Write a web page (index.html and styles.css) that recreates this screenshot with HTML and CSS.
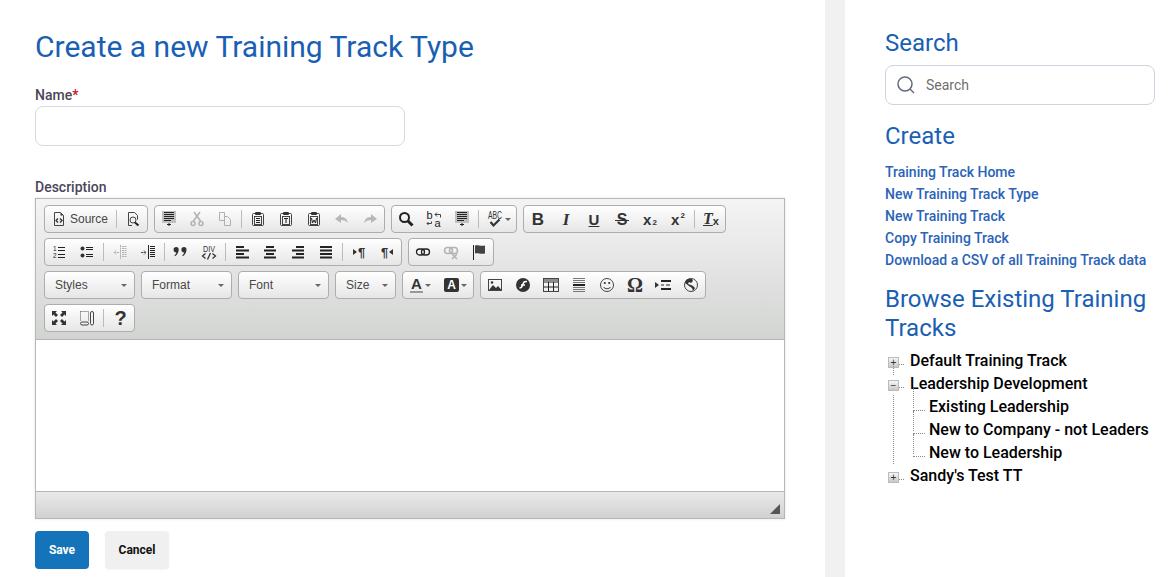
FILE: index.html
```html
<!DOCTYPE html>
<html lang="en">
<head>
<meta charset="utf-8">
<title>Create a new Training Track Type</title>
<link rel="stylesheet" href="styles.css">
</head>
<body>
<main class="main">
  <h1 class="title">Create a new Training Track Type</h1>
  <form class="form">
    <label class="label">Name<span class="req">*</span></label>
    <input class="input name-input" type="text">
    <label class="label desc-label">Description</label>
    <div class="editor">
      <div class="toolbar">
        <div class="row">
          <div class="group">
            <a class="btn btn-text"><svg class="ic" viewBox="0 0 16 16"><path class="ol" d="M3.500 1.500h6l3 3v10h-9z"/><path class="fill" d="M9.500 1.500l3 3h-3z"/><path class="ol2" d="M7 7.500l-2 2 2 2M9 7.500l2 2-2 2"/></svg><span>Source</span></a>
            <i class="sep"></i>
            <a class="btn"><svg class="ic" viewBox="0 0 16 16"><path class="ol" d="M7 14.500H3.500v-13h6l3 3v4"/><circle class="ol" cx="8" cy="9" r="3"/><path class="thick" d="M10 11.500l3.500 3"/></svg></a>
          </div>
          <div class="group">
            <a class="btn"><svg class="ic" viewBox="0 0 16 16"><rect class="shade" x="1" y="0" width="14" height="12"/><path class="line" d="M3 1.500h10M3 3.500h10M3 5.500h10M3 7.500h10M3 9.500h7M6 13.500h4M8 12v3"/></svg></a>
            <a class="btn"><svg class="ic" viewBox="0 0 16 16"><path class="gy2" d="M5 1l6.500 9M11 1l-6.500 9"/><circle class="gy2" cx="4" cy="12.500" r="2"/><circle class="gy2" cx="12" cy="12.500" r="2"/></svg></a>
            <a class="btn"><svg class="ic" viewBox="0 0 16 16"><path class="gy" d="M2.500 1.500h5v8h-5zM7.500 5.500h3l3 3v6h-6z"/></svg></a>
            <i class="sep"></i>
            <a class="btn"><svg class="ic" viewBox="0 0 16 16"><path class="ol" d="M5 2.500H3.500a1 1 0 0 0-1 1v10a1 1 0 0 0 1 1h9a1 1 0 0 0 1-1v-10a1 1 0 0 0-1-1H11"/><rect class="ol" x="4.500" y="5.500" width="7" height="8"/><rect class="fill" x="5" y="1" width="6" height="3" rx="1"/><path class="line" d="M6 7.500h4M6 9.500h4M6 11.500h4"/></svg></a>
            <a class="btn"><svg class="ic" viewBox="0 0 16 16"><path class="ol" d="M5 2.500H3.500a1 1 0 0 0-1 1v10a1 1 0 0 0 1 1h9a1 1 0 0 0 1-1v-10a1 1 0 0 0-1-1H11"/><rect class="ol" x="4.500" y="5.500" width="7" height="8"/><rect class="fill" x="5" y="1" width="6" height="3" rx="1"/><path class="line" d="M6 7.500h4M8 7.500v4.500"/></svg></a>
            <a class="btn"><svg class="ic" viewBox="0 0 16 16"><path class="ol" d="M5 2.500H3.500a1 1 0 0 0-1 1v10a1 1 0 0 0 1 1h9a1 1 0 0 0 1-1v-10a1 1 0 0 0-1-1H11"/><rect class="ol" x="4.500" y="5.500" width="7" height="8"/><rect class="fill" x="5" y="1" width="6" height="3" rx="1"/><path class="line" d="M5.500 7l1 5 1.500-3 1.500 3 1-5"/></svg></a>
            <a class="btn"><svg class="ic" viewBox="0 0 16 16"><path class="gyf" d="M1 8l6-5v3c4 0 6 2 7 6-2-2-4-3-7-3v3z"/></svg></a>
            <a class="btn"><svg class="ic" viewBox="0 0 16 16"><path class="gyf" d="M15 8L9 3v3c-4 0-6 2-7 6 2-2 4-3 7-3v3z"/></svg></a>
          </div>
          <div class="group">
            <a class="btn"><svg class="ic" viewBox="0 0 16 16"><circle class="thick" cx="6.500" cy="6.500" r="4.500"/><path class="thicker" d="M10 10l4.500 4.500"/></svg></a>
            <a class="btn"><svg class="ic" viewBox="0 0 16 16"><text class="tiny-b" x="0.500" y="8">b</text><text class="tiny-b" x="8.500" y="16">a</text><path class="ol" d="M1 12.500h4.500V10.500M1 12.500l1.500-1.500M1 12.500l1.500 1.500M14.500 3.500H9M9 3.500l2-2M9 3.500l2 2M14.500 3.500v3"/></svg></a>
            <a class="btn"><svg class="ic" viewBox="0 0 16 16"><rect class="shade" x="1" y="0" width="14" height="12"/><path class="line" d="M3 1.500h10M3 3.500h10M3 5.500h10M3 7.500h10M3 9.500h7M6 13.500h4M8 12v3"/></svg></a>
            <i class="sep"></i>
            <a class="btn btn-wide"><svg class="ic" viewBox="0 0 16 16"><text class="tiny" x="1" y="8" textLength="14" lengthAdjust="spacingAndGlyphs">ABC</text><path class="check" d="M3.500 11l3 3.500 6-6"/></svg><b class="caret"></b></a>
          </div>
          <div class="group">
            <a class="btn glyph g-b">B</a>
            <a class="btn glyph g-i">I</a>
            <a class="btn glyph g-u">U</a>
            <a class="btn glyph g-s">S</a>
            <a class="btn glyph g-x">x<small>2</small></a>
            <a class="btn glyph g-x">x<sup>2</sup></a>
            <i class="sep"></i>
            <a class="btn glyph g-tx"><em>T</em><small>x</small></a>
          </div>
        </div>
        <div class="row">
          <div class="group">
            <a class="btn"><svg class="ic" viewBox="0 0 16 16"><text class="tiny2" x="2" y="7">1</text><text class="tiny2" x="2" y="14">2</text><path class="line" d="M7 3.500h7M7 6.500h7M7 10.500h7M7 13.500h7"/></svg></a>
            <a class="btn"><svg class="ic" viewBox="0 0 16 16"><circle class="fill" cx="3.500" cy="4.500" r="2"/><circle class="fill" cx="3.500" cy="11.500" r="2"/><path class="line" d="M7 3.500h7M7 5.500h7M7 10.500h7M7 12.500h7"/></svg></a>
            <i class="sep"></i>
            <a class="btn"><svg class="ic" viewBox="0 0 16 16"><path class="gy" d="M8.500 1v14M10 2.500h5M10 4.500h5M10 6.500h5M10 8.500h5M10 10.500h5M10 12.500h5M7 8.500H2M4 6.500l-2 2 2 2" stroke-dasharray="2 0.500"/></svg></a>
            <a class="btn"><svg class="ic" viewBox="0 0 16 16"><path class="line" d="M8.500 1v14M10 2.500h5M10 4.500h5M10 6.500h5M10 8.500h5M10 10.500h5M10 12.500h5"/><path class="ol" d="M1 8.500h5M4 6.500l2 2-2 2" stroke-dasharray="2 0.500"/></svg></a>
            <i class="sep"></i>
            <a class="btn"><svg class="ic" viewBox="0 0 16 16"><path class="fill" d="M3.200 3a2.500 2.500 0 0 1 2.500 2.500c0 3-1.500 5.500-3.700 6.700l-.6-.8c1.100-.8 1.800-1.900 2-3A2.500 2.500 0 1 1 3.200 3zM11 3a2.500 2.500 0 0 1 2.500 2.500c0 3-1.500 5.500-3.700 6.700l-.6-.8c1.100-.8 1.800-1.900 2-3A2.500 2.500 0 1 1 11 3z"/></svg></a>
            <a class="btn"><svg class="ic" viewBox="0 0 16 16"><text class="tiny3" x="2" y="8" textLength="12" lengthAdjust="spacingAndGlyphs">DIV</text><path class="ol2" d="M4.500 9.500l-3 2.500 3 2.500M11.500 9.500l3 2.500-3 2.500M9.500 9l-3 6.500"/></svg></a>
            <i class="sep"></i>
            <a class="btn"><svg class="ic" viewBox="0 0 16 16"><path class="bar" d="M2 3h8M2 6.500h13M2 10h8M2 13.500h13"/></svg></a>
            <a class="btn"><svg class="ic" viewBox="0 0 16 16"><path class="bar" d="M4 3h8M2 6.500h12M4 10h8M2 13.500h12"/></svg></a>
            <a class="btn"><svg class="ic" viewBox="0 0 16 16"><path class="bar" d="M6 3h8M2 6.500h12M6 10h8M2 13.500h12"/></svg></a>
            <a class="btn"><svg class="ic" viewBox="0 0 16 16"><path class="bar" d="M2 3h12M2 6.500h12M2 10h12M2 13.500h12"/></svg></a>
            <i class="sep"></i>
            <a class="btn glyph g-p"><svg class="mini" viewBox="0 0 4 6"><path class="fill" d="M0 0l4 3-4 3z"/></svg>¶</a>
            <a class="btn glyph g-p">¶<svg class="mini" viewBox="0 0 4 6"><path class="fill" d="M4 0L0 3l4 3z"/></svg></a>
          </div>
          <div class="group">
            <a class="btn"><svg class="ic" viewBox="0 0 16 16"><rect class="med" x="1.500" y="5" width="8" height="6" rx="3"/><rect class="med" x="6.500" y="5" width="8" height="6" rx="3"/></svg></a>
            <a class="btn"><svg class="ic" viewBox="0 0 16 16"><rect class="gy2" x="1.500" y="3.500" width="8" height="6" rx="3"/><rect class="gy2" x="6.500" y="3.500" width="8" height="6" rx="3"/><path class="gy2" d="M9 10l5 5M14 10l-5 5"/></svg></a>
            <a class="btn"><svg class="ic" viewBox="0 0 16 16"><path class="line" d="M2.500 1v15"/><path class="flag" d="M4 1.500c3-1 5 1 10 0v8c-5 1-7-1-10 0z"/></svg></a>
          </div>
        </div>
        <div class="row">
          <a class="combo combo-lg">Styles<b class="caret"></b></a>
          <a class="combo combo-lg">Format<b class="caret"></b></a>
          <a class="combo combo-lg">Font<b class="caret"></b></a>
          <a class="combo combo-sm">Size<b class="caret"></b></a>
          <div class="group">
            <a class="btn btn-wide glyph g-a"><span class="a-u">A</span><b class="caret"></b></a>
            <a class="btn btn-wide glyph g-a"><span class="a-bg">A</span><b class="caret"></b></a>
          </div>
          <div class="group">
            <a class="btn"><svg class="ic" viewBox="0 0 16 16"><rect class="ol" x="1.500" y="2.500" width="13" height="11"/><path class="fill" d="M2 13l4-5 3 3 2-2 3.500 4z"/><circle class="fill" cx="5" cy="5.500" r="1.300"/></svg></a>
            <a class="btn"><svg class="ic" viewBox="0 0 16 16"><circle class="fill" cx="8" cy="8" r="7"/><path class="wht" d="M4.500 11c2.500 0 2.500-1.500 3.500-4S9.500 4.500 12 4.500M6 8h4"/></svg></a>
            <a class="btn"><svg class="ic" viewBox="0 0 16 16"><rect class="ol" x="0.500" y="1.500" width="15" height="13"/><path class="line" d="M1 5h14M1 10h14M5.500 5v9M10.500 5v9"/><path class="line" d="M1 3h14"/></svg></a>
            <a class="btn"><svg class="ic" viewBox="0 0 16 16"><path class="gyl" d="M2 1.500h12M2 3.500h12M2 5.500h12M2 10.500h12M2 12.500h12M2 14.500h12"/><path class="bar" d="M2 8h12"/></svg></a>
            <a class="btn"><svg class="ic" viewBox="0 0 16 16"><circle class="ol" cx="8" cy="8" r="6.500"/><circle class="fill" cx="5.800" cy="6" r="1.100"/><circle class="fill" cx="10.200" cy="6" r="1.100"/><path class="ol" d="M4.500 10c1.500 2.300 5.500 2.300 7 0"/></svg></a>
            <a class="btn glyph g-o">Ω</a>
            <a class="btn"><svg class="ic" viewBox="0 0 16 16"><path class="fill" d="M0 5l4 3-4 3z"/><path class="bar" d="M6 4h10M6 12h10"/><path class="line" d="M6 8h3M11 8h4"/></svg></a>
            <a class="btn"><svg class="ic" viewBox="0 0 16 16"><circle class="ol" cx="8" cy="8" r="6.500"/><path class="fill" d="M5 2l4 0 1 2-2 2-2-1-1 2 3 1 2 1 2 2-2 3-1-3-3-2-4-3 1-3z"/></svg></a>
          </div>
        </div>
        <div class="row">
          <div class="group">
            <a class="btn"><svg class="ic" viewBox="0 0 16 16"><path class="fill" d="M1 1h5L4.500 2.500 7 5 5 7 2.500 4.500 1 6zM15 1v5l-1.500-1.500L11 7 9 5l2.500-2.500L10 1zM1 15v-5l1.500 1.500L5 9l2 2-2.500 2.500L6 15zM15 15h-5l1.500-1.500L9 11l2-2 2.500 2.500L15 10z"/></svg></a>
            <a class="btn"><svg class="ic" viewBox="0 0 16 16"><path class="dots" d="M1.500 1.500h8v9M1.500 1.500v9"/><rect class="ol" x="1.500" y="12" width="8" height="3" rx="1.500"/><rect class="ol" x="11.500" y="1.500" width="3" height="13.500" rx="1.500"/></svg></a>
            <i class="sep"></i>
            <a class="btn glyph g-q">?</a>
          </div>
        </div>
      </div>
      <div class="content"></div>
      <div class="statusbar"><svg class="grip" viewBox="0 0 10 10"><path d="M10 0v10H0z"/></svg></div>
    </div>
    <div class="actions">
      <button class="action save" type="button">Save</button>
      <button class="action cancel" type="button">Cancel</button>
    </div>
  </form>
</main>
<aside class="side">
  <h2 class="side-head head-search">Search</h2>
  <div class="search">
    <svg class="search-ic" viewBox="0 0 18 18"><circle cx="8" cy="8" r="7"/><path d="M13 13l4 4"/></svg>
    <input class="search-input" type="text" placeholder="Search">
  </div>
  <h2 class="side-head head-create">Create</h2>
  <ul class="links">
    <li><a>Training Track Home</a></li>
    <li><a>New Training Track Type</a></li>
    <li><a>New Training Track</a></li>
    <li><a>Copy Training Track</a></li>
    <li><a>Download a CSV of all Training Track data</a></li>
  </ul>
  <h2 class="side-head head-browse">Browse Existing Training Tracks</h2>
  <ul class="tree">
    <li class="node"><span class="tog">+</span><span class="conn"></span><span class="node-text">Default Training Track</span></li>
    <li class="node"><span class="tog">−</span><span class="conn"></span><span class="node-text">Leadership Development</span></li>
    <li class="kids">
      <ul class="subtree">
        <li class="leaf"><span class="conn leaf-conn"></span><span class="node-text">Existing Leadership</span></li>
        <li class="leaf"><span class="conn leaf-conn"></span><span class="node-text">New to Company - not Leaders</span></li>
        <li class="leaf"><span class="conn leaf-conn"></span><span class="node-text">New to Leadership</span></li>
      </ul>
    </li>
    <li class="node"><span class="tog">+</span><span class="conn"></span><span class="node-text">Sandy's Test TT</span></li>
  </ul>
</aside>
</body>
</html>
```

FILE: styles.css
```css
* { box-sizing: border-box; }
html, body { margin: 0; height: 577px; overflow: hidden; background: #fff; }
body { display: flex; font-family: Roboto, "Liberation Sans", sans-serif; color: #000; }

.main { width: 825px; flex: none; padding: 27px 0 0 35px; }
.title { margin: 0; font-size: 30px; line-height: 40px; font-weight: 400; color: #1a5fb4; }
.form { display: flex; flex-direction: column; align-items: flex-start; margin-top: 20px; }
.label { font-size: 14px; line-height: 17px; font-weight: 500; color: #4b4658; }
.req { color: #d01020; }
.input { display: block; border: 1px solid #d8dae3; border-radius: 8px; background: #fff; }
.name-input { width: 370px; height: 40px; margin-top: 2px; }
.desc-label { margin-top: 33px; }

.editor { width: 750px; height: 321px; margin-top: 2px; border: 1px solid #b6b6b6; display: flex; flex-direction: column; box-shadow: 0 0 3px rgba(0,0,0,.1); }
.toolbar { height: 141px; flex: none; padding: 6px 8px 0; background: linear-gradient(#f4f4f4, #d2d4d2); border-bottom: 1px solid #b6b6b6; display: flex; flex-direction: column; gap: 5px; }
.row { display: flex; gap: 6px; height: 28px; }
.group { display: flex; align-items: center; height: 28px; border: 1px solid #adadad; border-radius: 4px; background: linear-gradient(#fff, #e6e6e6); }
.btn { width: 28px; height: 26px; flex: none; display: flex; align-items: center; justify-content: center; color: #333; }
.btn-text { width: 69px; justify-content: flex-start; padding-left: 6px; gap: 3px; font: 12px "Liberation Sans", Arial, sans-serif; color: #474747; }
.btn-wide { width: 35px; gap: 2px; }
.sep { width: 1px; height: 18px; margin: 0 2px; background: #bcbcbc; flex: none; }
.ic { width: 16px; height: 16px; display: block; flex: none; overflow: visible; }
.ic path, .ic circle, .ic rect { fill: none; }
.ic .ol { stroke: #444; stroke-width: 1; }
.ic .ol2 { stroke: #333; stroke-width: 1.300; }
.ic .med { stroke: #222; stroke-width: 1.300; }
.ic .thick { stroke: #222; stroke-width: 2; }
.ic .thicker { stroke: #222; stroke-width: 3; }
.ic .line { stroke: #222; stroke-width: 1; }
.ic .bar { stroke: #222; stroke-width: 2; }
.ic .fill { fill: #333; }
.ic .shade { fill: #c0c0c0; }
.ic .gy { stroke: #b0b0b0; stroke-width: 1; }
.ic .gy2 { stroke: #b4b4b4; stroke-width: 1.600; }
.ic .gyl { stroke: #777; stroke-width: 1; }
.ic .gyf { fill: #b8b8b8; }
.ic .check { stroke: #333; stroke-width: 2.200; }
.ic .flag { fill: #444; }
.ic .wht { stroke: #fff; stroke-width: 1.600; }
.ic .dots { stroke: #555; stroke-width: 1; stroke-dasharray: 1 1; }
.tiny { font: 10px "Liberation Sans", sans-serif; fill: #333; }
.tiny-b { font: 11px "Liberation Sans", sans-serif; fill: #222; }
.tiny2 { font: 6.500px "Liberation Sans", sans-serif; fill: #222; }
.tiny3 { font: 9px "Liberation Sans", sans-serif; fill: #333; }
.caret { width: 0; height: 0; border: 3px solid transparent; border-top-color: #666; border-bottom: 0; flex: none; }

.glyph { font-family: "Liberation Sans", Arial, sans-serif; color: #333; line-height: 1; }
.g-b { font-size: 17px; font-weight: 700; }
.g-i { font-size: 17px; font-style: italic; font-family: "Liberation Serif", serif; font-weight: 700; }
.g-u { font-size: 15px; font-weight: 700; text-decoration: underline; }
.g-s { position: relative; font-size: 16px; font-weight: 700; padding-top: 2px; }
.g-s::after { content: ""; position: absolute; left: 7px; right: 7px; top: 14px; height: 1px; background: #333; }
.g-x { font-size: 15px; font-weight: 700; }
.g-x small { font-size: 8px; align-self: flex-end; margin: 0 0 5px 1px; }
.g-x sup { font-size: 8px; align-self: flex-start; margin: 6px 0 0 1px; }
.g-tx { font-size: 16px; font-family: "Liberation Serif", serif; font-weight: 700; }
.g-tx em { text-decoration: underline; }
.g-tx small { font-size: 11px; font-family: "Liberation Sans", sans-serif; align-self: flex-end; margin-bottom: 5px; }
.g-p { font-size: 13px; font-weight: 700; gap: 1px; }
.mini { width: 4px; height: 6px; display: block; }
.mini path { fill: #333; }
.g-o { font-size: 20px; font-family: "Liberation Serif", serif; font-weight: 700; }
.g-q { font-size: 20px; font-weight: 700; padding-left: 1px; }
.g-a { font-size: 15px; font-weight: 700; }
.a-u { border-bottom: 2px solid #999; padding: 0 1px; line-height: 14px; color: #333; }
.a-bg { background: #333; color: #fff; border-radius: 2px; padding: 0 3px; font-size: 12px; line-height: 14px; }

.combo { height: 28px; display: flex; align-items: center; justify-content: space-between; padding: 0 7px 0 10px; border: 1px solid #adadad; border-radius: 4px; background: linear-gradient(#fff, #e6e6e6); font: 12px "Liberation Sans", Arial, sans-serif; color: #484848; }
.combo-lg { width: 91px; }
.combo-sm { width: 61px; }

.content { flex: 1; background: #fff; }
.statusbar { height: 27px; flex: none; display: flex; align-items: flex-end; justify-content: flex-end; padding: 0 4px 4px 0; background: linear-gradient(#e9e9e9, #d0d2d0); border-top: 1px solid #b6b6b6; }
.grip { width: 10px; height: 10px; display: block; }
.grip path { fill: #555; }

.actions { display: flex; gap: 16px; margin-top: 12px; }
.action { height: 38px; border: 0; border-radius: 4px; font: 700 12px Roboto, sans-serif; padding: 0; }
.save { width: 54px; background: #1473b9; color: #fff; }
.cancel { width: 64px; background: #f0f0f0; color: #111; box-shadow: 0 1px 2px rgba(0,0,0,.04); }

.side { flex: 1; min-width: 0; border-left: 20px solid #f1f1f1; padding: 29px 0 0 40px; }
.side-head { margin: 0; font-size: 24px; font-weight: 400; line-height: 29px; color: #1a5fb4; }
.search { display: flex; align-items: center; width: 270px; height: 40px; margin-top: 7px; padding-left: 11px; border: 1px solid #d0d3df; border-radius: 8px; }
.search-ic { width: 18px; height: 18px; flex: none; fill: none; stroke: #626a7a; stroke-width: 1.500; }
.search-input { flex: 1; min-width: 0; border: 0; outline: 0; padding: 0; margin-left: 11px; background: none; font: 14px Roboto, sans-serif; }
.search-input::placeholder { color: #6f6f6f; opacity: 1; }
.head-create { margin-top: 17px; }
.links { list-style: none; margin: 10px 0 0; padding: 0; font-size: 14px; font-weight: 500; line-height: 22px; color: #2a63b8; }
.head-browse { margin-top: 14px; }
.tree { list-style: none; margin: 6px 0 0; padding: 0 0 0 3px; font-size: 16px; font-weight: 500; line-height: 23px; color: #000; }
.node { position: relative; display: flex; align-items: center; height: 23px; }
.node-text { white-space: nowrap; }
.tog { width: 11px; height: 11px; margin-top: 4px; flex: none; display: flex; align-items: center; justify-content: center; font: 10px/1 "Liberation Sans", sans-serif; color: #333; background: linear-gradient(#f6f6f6, #c8c8c8); border: 1px solid #bbb; }
.conn { width: 5px; flex: none; margin-top: 8px; margin-right: 6px; border-top: 1px dotted #888; }
.node:nth-child(1)::after { content: ""; position: absolute; left: 5px; top: 17px; height: 9px; border-left: 1px dotted #888; }
.kids { border-left: 1px dotted #888; margin-left: 5px; height: 69px; }
.subtree { list-style: none; margin: 0; padding: 0 0 0 19px; border: 0; }
.leaf { position: relative; display: flex; align-items: center; height: 23px; }
.leaf::before { content: ""; position: absolute; left: 0; top: -7px; height: 20px; border-left: 1px dotted #888; }
.leaf-conn { width: 12px; margin-right: 4px; }
```
